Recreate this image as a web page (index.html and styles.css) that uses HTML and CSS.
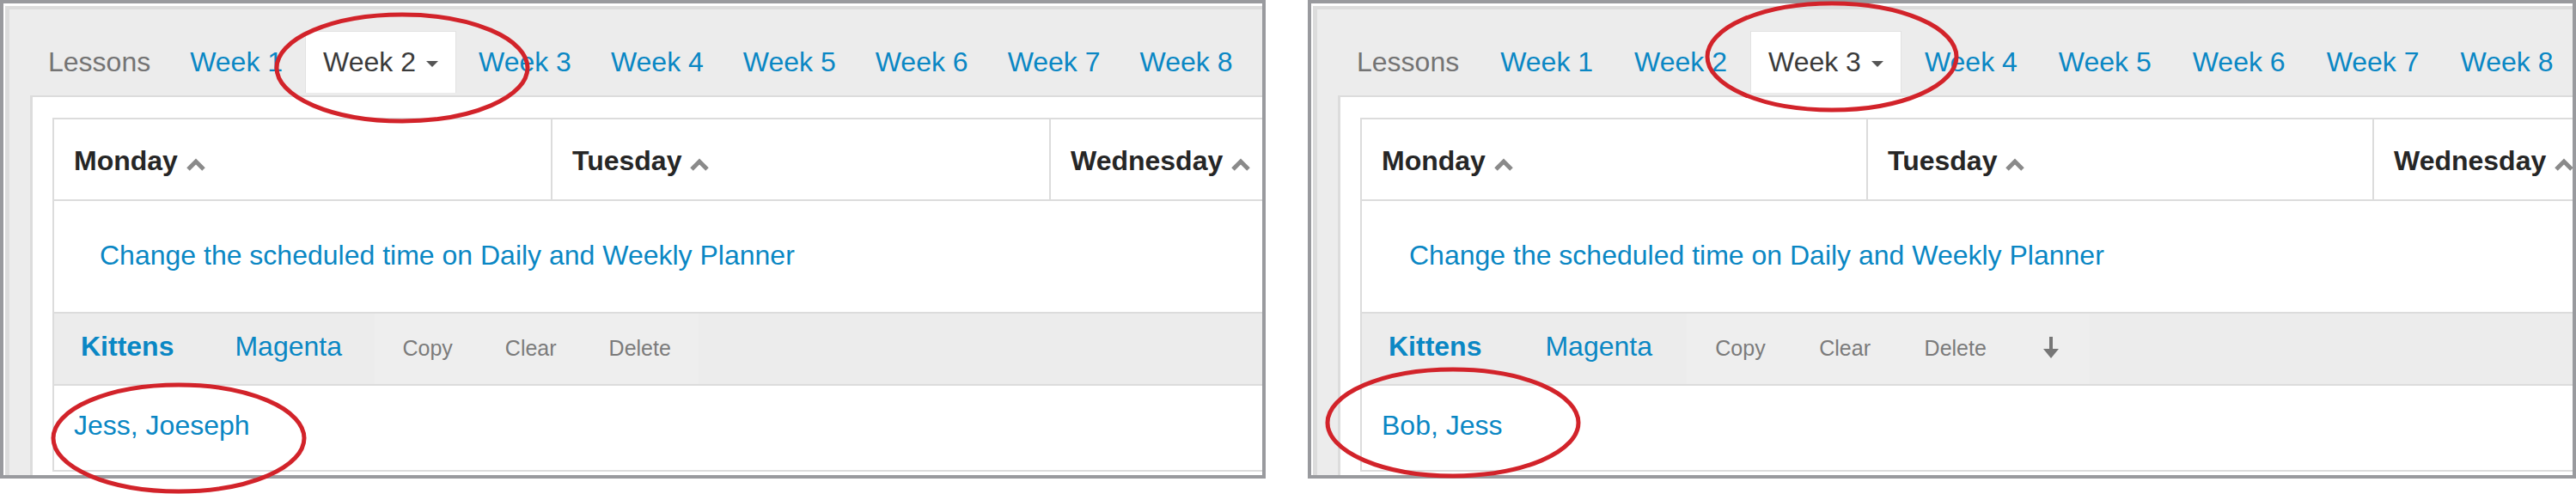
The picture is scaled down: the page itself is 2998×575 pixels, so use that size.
FILE: index.html
```html
<!DOCTYPE html>
<html>
<head>
<meta charset="utf-8">
<title>Planner week tabs</title>
<link rel="stylesheet" href="styles.css">
</head>
<body>
<div class="page">

  <section class="shot shot--a">
    <div class="app">
      <nav class="tabs">
        <span class="tab tab--muted">Lessons</span>
        <a class="tab">Week 1</a>
        <a class="tab tab--active">Week 2<span class="caret"></span></a>
        <a class="tab">Week 3</a>
        <a class="tab">Week 4</a>
        <a class="tab">Week 5</a>
        <a class="tab">Week 6</a>
        <a class="tab">Week 7</a>
        <a class="tab">Week 8</a>
      </nav>
      <div class="pane">
        <div class="planner">
          <div class="head">
            <div class="day">Monday<svg class="chev" viewBox="0 0 22 15"><polyline points="2,13 11,4 20,13"/></svg></div>
            <div class="day">Tuesday<svg class="chev" viewBox="0 0 22 15"><polyline points="2,13 11,4 20,13"/></svg></div>
            <div class="day">Wednesday<svg class="chev" viewBox="0 0 22 15"><polyline points="2,13 11,4 20,13"/></svg></div>
          </div>
          <div class="note"><a class="link">Change the scheduled time on Daily and Weekly Planner</a></div>
          <div class="toolbar">
            <a class="gtab gtab--on">Kittens</a>
            <a class="gtab">Magenta</a>
            <div class="actions">
              <span class="act">Copy</span>
              <span class="act">Clear</span>
              <span class="act">Delete</span>
            </div>
          </div>
          <div class="names"><a class="link">Jess, Joeseph</a></div>
        </div>
      </div>
    </div>
    <svg class="marks" viewBox="0 0 1480 580">
      <ellipse cx="468" cy="79" rx="146" ry="62"/>
      <ellipse cx="208" cy="510" rx="146" ry="62"/>
    </svg>
  </section>

  <section class="shot shot--b">
    <div class="app">
      <nav class="tabs">
        <span class="tab tab--muted">Lessons</span>
        <a class="tab">Week 1</a>
        <a class="tab">Week 2</a>
        <a class="tab tab--active">Week 3<span class="caret"></span></a>
        <a class="tab">Week 4</a>
        <a class="tab">Week 5</a>
        <a class="tab">Week 6</a>
        <a class="tab">Week 7</a>
        <a class="tab">Week 8</a>
      </nav>
      <div class="pane">
        <div class="planner">
          <div class="head">
            <div class="day">Monday<svg class="chev" viewBox="0 0 22 15"><polyline points="2,13 11,4 20,13"/></svg></div>
            <div class="day">Tuesday<svg class="chev" viewBox="0 0 22 15"><polyline points="2,13 11,4 20,13"/></svg></div>
            <div class="day">Wednesday<svg class="chev" viewBox="0 0 22 15"><polyline points="2,13 11,4 20,13"/></svg></div>
          </div>
          <div class="note"><a class="link">Change the scheduled time on Daily and Weekly Planner</a></div>
          <div class="toolbar">
            <a class="gtab gtab--on">Kittens</a>
            <a class="gtab">Magenta</a>
            <div class="actions">
              <span class="act">Copy</span>
              <span class="act">Clear</span>
              <span class="act">Delete</span>
              <span class="act act--icon"><svg class="down" viewBox="0 0 18 25"><path d="M7 0h4v14h7l-9 11-9-11h7z"/></svg></span>
            </div>
          </div>
          <div class="names"><a class="link">Bob, Jess</a></div>
        </div>
      </div>
    </div>
    <svg class="marks" viewBox="0 0 1480 580">
      <ellipse cx="610" cy="66" rx="145" ry="62"/>
      <ellipse cx="169" cy="492" rx="146" ry="62"/>
    </svg>
  </section>

</div>
</body>
</html>
```

FILE: styles.css
```css
* { box-sizing: border-box; }

html, body {
  margin: 0;
  background: #ffffff;
}

body {
  font-family: "Liberation Sans", Arial, Helvetica, sans-serif;
}

.page {
  display: flex;
  gap: 49px;
  width: 2998px;
  height: 575px;
}

/* one framed screenshot */
.shot {
  position: relative;
  flex: none;
  height: 557px;
  border: 4px solid #999a9e;
  padding: 3px 0 0 2px;
  background: #ffffff;
}
.shot--a { width: 1473px; }
.shot--b { width: 1476px; }

.app {
  display: flex;
  flex-direction: column;
  height: 100%;
  overflow: hidden;
  background: #ececec;
  border-top: 4px solid #dcdcdc;
  border-left: 5px solid #dcdcdc;
}

/* week tabs */
.tabs {
  display: flex;
  align-items: flex-start;
  flex: none;
  height: 100px;
  padding: 25px 0 3px 22px;
  font-size: 32px;
  line-height: 37px;
  white-space: nowrap;
}

.tab {
  display: block;
  height: 72px;
  padding: 18px 23px 17px;
  color: #0a87c4;
}

.tab--muted { color: #747474; }

.tab--active {
  margin: 0 3px;
  padding: 17px 20px 17px;
  background: #ffffff;
  border: 1px solid #e2e2e2;
  border-bottom: 0;
  color: #3a3a3a;
}

.caret {
  display: inline-block;
  width: 0;
  height: 0;
  margin-left: 12px;
  vertical-align: middle;
  border-top: 7px solid #555555;
  border-left: 7px solid transparent;
  border-right: 7px solid transparent;
}

.shot--b .tab { padding-left: 24px; padding-right: 24px; }
.shot--b .tab--active { padding-left: 20px; padding-right: 20px; }

/* content pane */
.pane {
  flex: 1;
  margin-left: 24px;
  padding: 24px 0 0 23px;
  background: #ffffff;
  border-top: 2px solid #dcdcdc;
  border-left: 3px solid #dcdcdc;
}

.planner {
  width: 1742px;
  border-top: 2px solid #dcdcdc;
  border-left: 2px solid #dcdcdc;
  font-size: 32px;
  line-height: 37px;
  white-space: nowrap;
}
.shot--b .planner { width: 1769px; }

.head {
  display: flex;
  border-bottom: 2px solid #dcdcdc;
}

.day {
  flex: none;
  width: 580px;
  padding: 30px 23px 26px;
  border-right: 2px solid #dcdcdc;
  font-weight: bold;
  color: #262626;
}
.shot--b .day { width: 589px; }

.chev {
  width: 22px;
  height: 15px;
  margin-left: 10px;
  vertical-align: -1px;
}
.chev polyline {
  fill: none;
  stroke: #8a8a8a;
  stroke-width: 5;
}

.link { color: #0a87c4; }

.note {
  padding: 45px 0 47px 53px;
  border-bottom: 2px solid #dcdcdc;
}
.shot--b .note { padding-left: 55px; }

.toolbar {
  display: flex;
  align-items: stretch;
  height: 84px;
  padding-left: 31px;
  background: #ececec;
  border-bottom: 2px solid #dcdcdc;
}

.gtab {
  padding-top: 20px;
  color: #0a87c4;
}
.gtab--on { font-weight: bold; }
.gtab + .gtab { margin-left: 71px; }
.shot--b .gtab + .gtab { margin-left: 74px; }

.actions {
  display: flex;
  margin-left: 38px;
  padding: 0 2px;
  background: #eeeeee;
}
.shot--b .actions { margin-left: 40px; }

.act {
  padding: 22px 30.5px 0;
  font-size: 25px;
  line-height: 37px;
  color: #7b7b7b;
}
.shot--b .act { padding-left: 31.3px; padding-right: 31.3px; }
.shot--b .act--icon { padding-left: 35px; padding-right: 34px; }

.down {
  width: 18px;
  height: 25px;
  vertical-align: -3px;
  fill: #767676;
}

.names {
  padding: 28px 0 33px 23px;
  border-bottom: 2px solid #dcdcdc;
}

/* red annotation rings drawn over the screenshot */
.marks {
  position: absolute;
  left: -4px;
  top: -4px;
  width: 1480px;
  height: 580px;
  overflow: visible;
  pointer-events: none;
}
.marks ellipse {
  fill: none;
  stroke: #d2232a;
  stroke-width: 5;
}
```
